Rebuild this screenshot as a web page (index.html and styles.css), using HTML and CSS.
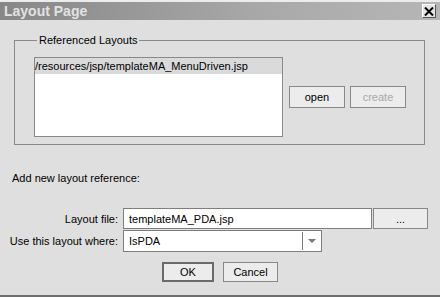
FILE: index.html
```html
<!DOCTYPE html>
<html lang="en">
<head>
    <meta charset="UTF-8">
    <title>Layout Page</title>
    <link rel="stylesheet" href="styles.css">
</head>
<body>
    <div class="window">
        <div class="titlebar">
            <span class="title">Layout Page</span>
            <button class="close-btn" aria-label="Close">
                <svg width="10" height="9" viewBox="0 0 10 9">
                    <path d="M1 0.5 L9 8.5 M9 0.5 L1 8.5" stroke="#000" stroke-width="2"/>
                </svg>
            </button>
        </div>

        <div class="content">
            <fieldset class="group">
                <legend>Referenced Layouts</legend>
                <div class="group-row">
                    <div class="listbox">
                        <div class="list-item selected">/resources/jsp/templateMA_MenuDriven.jsp</div>
                    </div>
                    <button class="btn">open</button>
                    <button class="btn" disabled>create</button>
                </div>
            </fieldset>

            <p class="section-label">Add new layout reference:</p>

            <div class="form-grid">
                <label class="field-label">Layout file:</label>
                <div class="field-line">
                    <input class="text-input" type="text" value="templateMA_PDA.jsp">
                    <button class="btn browse-btn">...</button>
                </div>

                <label class="field-label">Use this layout where:</label>
                <div class="field-line">
                    <div class="combo">
                        <span class="combo-value">IsPDA</span>
                        <span class="combo-arrow"></span>
                    </div>
                </div>
            </div>

            <div class="dialog-buttons">
                <button class="btn default-btn">OK</button>
                <button class="btn">Cancel</button>
            </div>
        </div>
    </div>
</body>
</html>
```

FILE: styles.css
```css
body {
    margin: 0;
    font-family: "Liberation Sans", Arial, sans-serif;
    font-size: 11px;
    color: #000;
    background: #dfdfdf;
}
.window {
    width: 440px;
    height: 297px;
    box-sizing: border-box;
    background: #dfdfdf;
    border-top: 2px solid #ececec;
    border-bottom: 2px solid #6e6e6e;
    display: flex;
    flex-direction: column;
}
.titlebar {
    height: 18px;
    display: flex;
    align-items: center;
    justify-content: space-between;
    padding: 0 4px 0 4px;
    background: linear-gradient(to right, #878787, #a9a9a9 60%, #b6b6b6);
}
.title {
    font-weight: bold;
    font-size: 14px;
    color: #e2e2e2;
}
.close-btn {
    width: 14px;
    height: 14px;
    padding: 0;
    box-sizing: border-box;
    display: flex;
    align-items: center;
    justify-content: center;
    background: #e4e4e4;
    border: 1px solid;
    border-color: #fff #555 #555 #fff;
}
.content {
    flex: 1;
    padding: 0 12px;
}
.group {
    margin: 13px 0 0 2px;
    width: 411px;
    height: 112px;
    box-sizing: border-box;
    padding: 10px 0 0 19px;
    border: 1px solid #8a8a8a;
}
.group legend {
    padding: 0 2px;
    margin-left: 3px;
    line-height: 14px;
}
.group-row {
    display: flex;
    align-items: center;
    gap: 6px;
}
.listbox {
    width: 249px;
    height: 80px;
    box-sizing: border-box;
    border: 1px solid #8a8a8a;
    background: #fff;
}
.list-item {
    height: 16px;
    line-height: 16px;
}
.list-item.selected {
    background: #dadada;
}
.btn {
    width: 56px;
    height: 22px;
    padding: 0;
    font-family: inherit;
    font-size: 11px;
    color: #000;
    background: #ececec;
    border: 1px solid #888;
}
.btn:disabled {
    color: #a8a8a8;
    margin-left: -1px;
}
.section-label {
    margin: 27px 0 0 0;
    line-height: 13px;
}
.form-grid {
    display: grid;
    grid-template-columns: 118px auto;
    row-gap: 1px;
    margin-top: 23px;
    margin-left: -12px;
    align-items: center;
}
.field-label {
    text-align: right;
    white-space: nowrap;
}
.field-line {
    display: flex;
    padding-left: 5px;
}
.text-input {
    width: 249px;
    height: 21px;
    box-sizing: border-box;
    padding: 0 5px;
    font-family: inherit;
    font-size: 11px;
    border: 1px solid #7f7f7f;
    background: #fff;
    outline: none;
}
.browse-btn {
    width: 55px;
    height: 21px;
    margin-left: 1px;
}
.combo {
    width: 199px;
    height: 22px;
    box-sizing: border-box;
    border: 1px solid #7f7f7f;
    background: #fff;
    display: flex;
    align-items: center;
}
.combo-value {
    flex: 1;
    padding-left: 5px;
}
.combo-arrow {
    width: 18px;
    height: 18px;
    border-left: 1px solid #7f7f7f;
    position: relative;
}
.combo-arrow::after {
    content: "";
    position: absolute;
    left: 5px;
    top: 7px;
    border-left: 4px solid transparent;
    border-right: 4px solid transparent;
    border-top: 4px solid #777;
}
.dialog-buttons {
    display: flex;
    justify-content: center;
    gap: 9px;
    margin-top: 10px;
}
.dialog-buttons .btn {
    height: 20px;
    width: 55px;
}
.dialog-buttons .default-btn {
    width: 52px;
    box-sizing: border-box;
    border: 2px solid #6a6a6a;
}
```
